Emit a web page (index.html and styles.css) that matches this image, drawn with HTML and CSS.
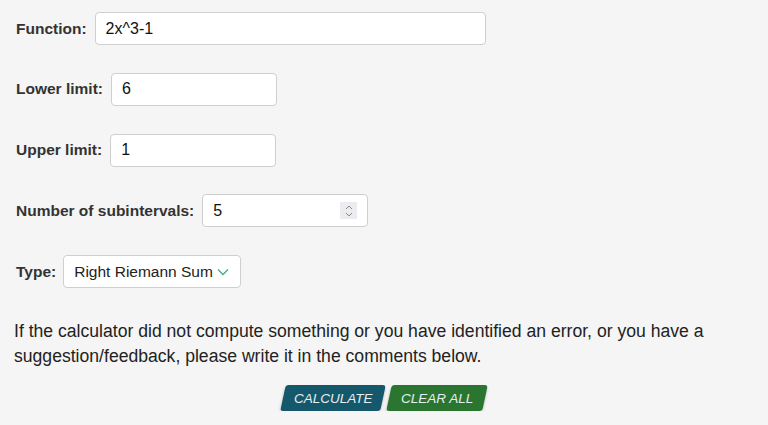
FILE: index.html
```html
<!DOCTYPE html>
<html>
<head>
<meta charset="utf-8">
<link rel="stylesheet" href="styles.css">
</head>
<body>
<div class="calc">
  <div class="row">
    <label class="lbl">Function:</label>
    <div class="field w-func">2x^3-1</div>
  </div>
  <div class="row">
    <label class="lbl">Lower limit:</label>
    <div class="field w-num">6</div>
  </div>
  <div class="row">
    <label class="lbl">Upper limit:</label>
    <div class="field w-num">1</div>
  </div>
  <div class="row">
    <label class="lbl">Number of subintervals:</label>
    <div class="field w-num spin-field">
      <span>5</span>
      <span class="spin">
        <svg width="10" height="14" viewBox="0 0 10 14"><path d="M2 5 L5 2 L8 5" fill="none" stroke="#8a8a8a" stroke-width="1"/><path d="M2 9 L5 12 L8 9" fill="none" stroke="#8a8a8a" stroke-width="1"/></svg>
      </span>
    </div>
  </div>
  <div class="row">
    <label class="lbl lbl-type">Type:</label>
    <div class="field select">
      <span class="sel-text">Right Riemann Sum</span>
      <svg class="chev" width="12" height="8" viewBox="0 0 12 8"><path d="M1 1.5 L6 6.5 L11 1.5" fill="none" stroke="#3fae8c" stroke-width="1.4"/></svg>
    </div>
  </div>
  <p class="note">If the calculator did not compute something or you have identified an error, or you have a suggestion/feedback, please write it in the comments below.</p>
  <div class="actions">
    <button class="btn btn-calc"><span>CALCULATE</span></button>
    <button class="btn btn-clear"><span>CLEAR ALL</span></button>
  </div>
</div>
</body>
</html>
```
FILE: styles.css
```css
html, body {
  margin: 0;
  padding: 0;
  background: #f5f5f5;
}
body {
  font-family: "Liberation Sans", Arial, sans-serif;
  color: #222;
}
.calc {
  padding: 12px 16px 0 16px;
}
.row {
  display: flex;
  align-items: center;
  height: 33px;
  margin-bottom: 27.75px;
}
.lbl {
  font-weight: bold;
  font-size: 15.5px;
  color: #333;
  margin-right: 8px;
  white-space: nowrap;
}
.lbl-type { margin-right: 7px; }
.field {
  box-sizing: border-box;
  height: 33px;
  background: #fff;
  border: 1px solid #cfcfcf;
  border-radius: 4px;
  display: flex;
  align-items: center;
  padding: 0 10px;
  font-size: 16px;
  color: #111;
  white-space: nowrap;
}
.w-func { width: 391px; }
.w-num { width: 166px; }
.spin-field {
  justify-content: space-between;
  padding-right: 10px;
}
.spin {
  width: 17px;
  height: 17px;
  background: #ececf0;
  display: flex;
  align-items: center;
  justify-content: center;
}
.select {
  width: 178px;
  padding: 0 10px;
  color: #222;
  font-size: 15.5px;
}
.sel-text { flex: none; }
.chev { margin-left: 4px; flex: none; }
.note {
  margin: 0 0 0 -2px;
  padding-top: 3px;
  font-size: 17.6px;
  line-height: 25px;
  color: #222;
}
.actions {
  display: flex;
  justify-content: center;
  gap: 6px;
  margin-top: 16px;
}
.btn {
  border: none;
  height: 26px;
  padding: 0;
  transform: skewX(-12deg);
  border-radius: 3px;
  color: #e6eef0;
  font-family: "Liberation Sans", Arial, sans-serif;
  font-style: italic;
  font-size: 13.5px;
  white-space: nowrap;
  box-shadow: 0 2px 3px rgba(0,0,0,0.25);
}
.btn span {
  display: inline-block;
  transform: skewX(12deg);
}
.btn-calc { background: #15586c; width: 100px; }
.btn-clear { background: #2a7631; width: 96px; }
```
